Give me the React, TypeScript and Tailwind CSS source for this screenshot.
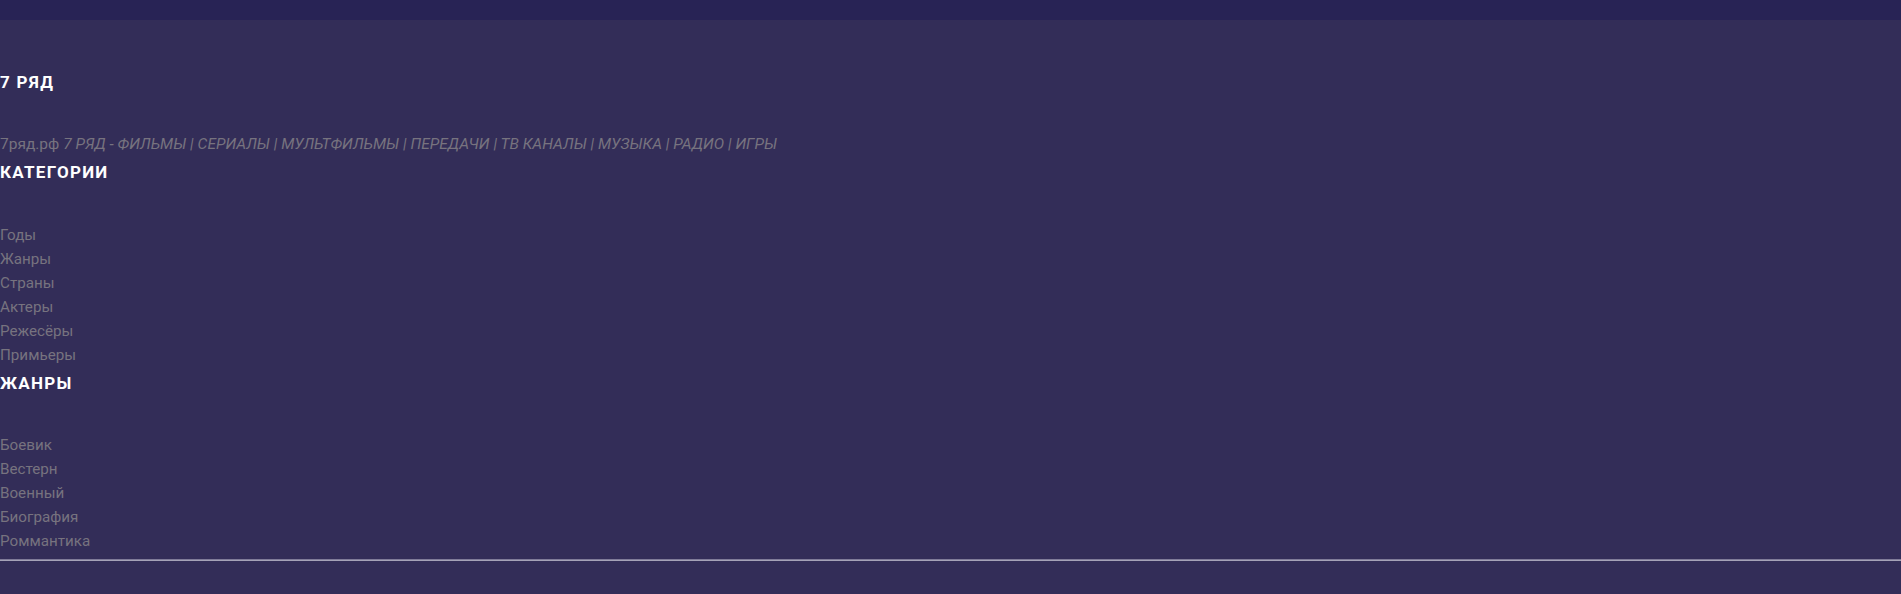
import React from "react";

const categories = ["Годы", "Жанры", "Страны", "Актеры", "Режесёры", "Примьеры"];
const genres = ["Боевик", "Вестерн", "Военный", "Биография", "Роммантика"];

function Heading({ children, cls }: { children: React.ReactNode; cls: string }) {
  return (
    <h3 className={`${cls} text-[17px] leading-[20px] font-bold tracking-[1.3px] text-white`}>
      {children}
    </h3>
  );
}

export default function App() {
  return (
    <div
      className="min-h-[594px] w-full bg-[#332d58]"
      style={{ fontFamily: "Roboto, 'Noto Sans', sans-serif" }}
    >
      <div className="h-[20px] bg-[#282355]" />
      <div className="pt-[52px]">
        <Heading cls="mt-0 mb-[40px]">7 РЯД</Heading>
        <p className="text-[15.5px] leading-[24px] text-[#77737f]">
          7ряд.рф{" "}
          <em className="italic">
            7 РЯД - ФИЛЬМЫ | СЕРИАЛЫ | МУЛЬТФИЛЬМЫ | ПЕРЕДАЧИ | ТВ КАНАЛЫ | МУЗЫКА | РАДИО | ИГРЫ
          </em>
        </p>
        <Heading cls="mt-[6px] mb-[41px]">КАТЕГОРИИ</Heading>
        <ul className="flex flex-col">
          {categories.map((c) => (
            <li key={c}>
              <a className="text-[15.2px] leading-[24px] text-[#77737f]">{c}</a>
            </li>
          ))}
        </ul>
        <Heading cls="mt-[6px] mb-[40px]">ЖАНРЫ</Heading>
        <ul className="flex flex-col">
          {genres.map((g) => (
            <li key={g}>
              <a className="text-[15.2px] leading-[24px] text-[#77737f]">{g}</a>
            </li>
          ))}
        </ul>
        <div className="mt-[6px] h-[1px] bg-[#7f7b98]" />
        <div className="h-[1px] bg-[#a6a3b8]" />
      </div>
    </div>
  );
}
